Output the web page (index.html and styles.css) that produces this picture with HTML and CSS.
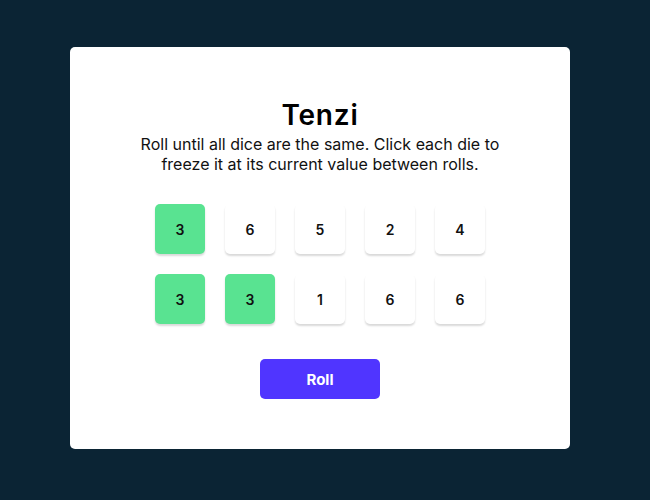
FILE: index.html
```html
<!DOCTYPE html>
<html>
<head>
<meta charset="utf-8">
<link rel="stylesheet" href="styles.css">
</head>
<body>
<main class="card">
  <h1 class="title">Tenzi</h1>
  <p class="instructions">Roll until all dice are the same. Click each die to freeze it at its current value between rolls.</p>
  <div class="dice">
    <button class="die held">3</button>
    <button class="die">6</button>
    <button class="die">5</button>
    <button class="die">2</button>
    <button class="die">4</button>
    <button class="die held">3</button>
    <button class="die held">3</button>
    <button class="die">1</button>
    <button class="die">6</button>
    <button class="die">6</button>
  </div>
  <button class="roll">Roll</button>
</main>
</body>
</html>
```
FILE: styles.css
```css
html, body {
  margin: 0;
  padding: 0;
  background: #0B2434;
  height: 100%;
}
body {
  font-family: Inter, "Noto Sans", sans-serif;
}
.card {
  box-sizing: border-box;
  width: 500px;
  height: 402px;
  margin: 47px 0 0 70px;
  background: #FFFFFF;
  border-radius: 5px;
  display: flex;
  flex-direction: column;
  align-items: center;
  padding-top: 50px;
}
.title {
  margin: 0 0 1px;
  font-size: 28px;
  font-weight: 600;
  line-height: 36px;
  color: #000;
  letter-spacing: 0.8px;
}
.instructions {
  margin: 0;
  max-width: 365px;
  text-align: center;
  font-size: 16px;
  line-height: 20px;
  color: #111;
}
.dice {
  margin-top: 30px;
  display: grid;
  grid-template-columns: repeat(5, 50px);
  gap: 20px;
}
.die {
  width: 50px;
  height: 50px;
  border: none;
  border-radius: 5px;
  background: #FFFFFF;
  box-shadow: 0 2px 2px rgba(0, 0, 0, 0.15);
  font-family: Inter, sans-serif;
  font-weight: 600;
  font-size: 14px;
  color: #111;
  padding: 0;
}
.die.held {
  background: #59E391;
}
.roll {
  margin-top: 35px;
  width: 120px;
  height: 40px;
  border: none;
  border-radius: 5px;
  background: #5035FF;
  color: #FFFFFF;
  font-family: Inter, sans-serif;
  font-weight: 700;
  font-size: 15px;
}
```
